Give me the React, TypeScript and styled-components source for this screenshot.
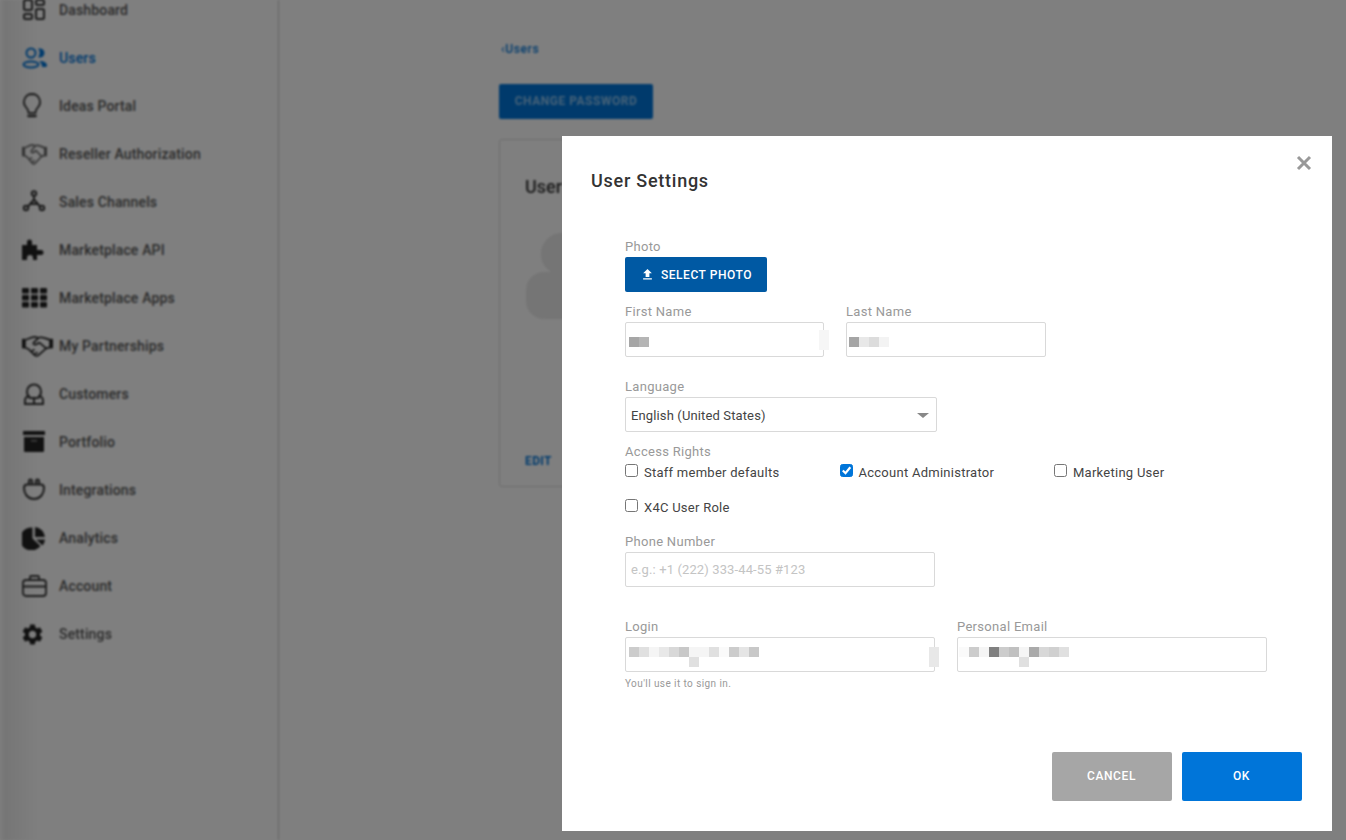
import React from "react";
import styled, { createGlobalStyle } from "styled-components";
import { MdSettings, MdFileUpload } from "react-icons/md";

const GlobalStyle = createGlobalStyle`
  html, body { margin: 0; padding: 0; height: 100%; overflow: hidden; }
  body { background: #fff; font-family: Roboto, "Liberation Sans", sans-serif; }
  * { box-sizing: border-box; }
`;

// --- page behind the dialog ---
const Screen = styled.div`
  position: relative;
  width: 1346px;
  height: 840px;
  overflow: hidden;
`;

const Page = styled.div`
  display: flex;
  height: 840px;
  filter: blur(1px);
`;

const Sidebar = styled.nav`
  flex: 0 0 279px;
  height: 840px;
  background: linear-gradient(90deg, #fafafa 0, #ececec 5px, #fafafa 30px, #fff 40px);
  border-right: 1px solid #c8c8c8;
`;

const NavList = styled.ul`
  list-style: none;
  margin: -14px 0 0;
  padding: 0 0 0 22px;
`;

const NavItem = styled.li<{ $active?: boolean }>`
  display: flex;
  align-items: center;
  height: 48px;
  color: ${(p) => (p.$active ? "#0075d9" : "#555")};
  font-size: 14px;
  font-weight: 500;
  letter-spacing: 0.15px;
`;

const IconSlot = styled.span`
  flex: 0 0 37px;
  display: flex;
  align-items: center;
  height: 26px;
`;

const Main = styled.main`
  flex: 1;
  padding: 41px 0 0 220px;
`;

const BackLink = styled.a`
  display: block;
  height: 16px;
  margin-left: 2px;
  color: #0075d9;
  font-size: 12px;
  font-weight: 500;
  line-height: 16px;
  letter-spacing: 0.6px;
`;

const ChangePassword = styled.div`
  display: flex;
  align-items: center;
  justify-content: center;
  width: 154px;
  height: 35px;
  margin-top: 27px;
  padding-bottom: 2px;
  border-radius: 2px;
  background: #0075d9;
  color: #8cc4f0;
  font-size: 12px;
  font-weight: 700;
  letter-spacing: 0.52px;
`;

const ProfileCard = styled.section`
  width: 640px;
  height: 348px;
  margin-top: 20px;
  padding: 36px 25px 0;
  border: 1px solid #d8d8d8;
  border-radius: 3px;
`;

const ProfileTitle = styled.h2`
  margin: 0;
  color: #333;
  font-size: 18px;
  font-weight: 500;
  line-height: 22px;
`;

const Avatar = styled.svg`
  display: block;
  margin: 34px 0 0;
`;

const EditLink = styled.a`
  display: block;
  margin-top: 134px;
  color: #0075d9;
  font-size: 12px;
  font-weight: 700;
  letter-spacing: 0.4px;
`;

const Backdrop = styled.div`
  position: absolute;
  inset: 0;
  background: rgba(0, 0, 0, 0.5);
`;

// --- dialog ---
const Dialog = styled.div`
  position: absolute;
  top: 136px;
  left: 562px;
  width: 770px;
  height: 695px;
  background: #fff;
`;

const CloseButton = styled.button`
  position: absolute;
  top: 19px;
  right: 20px;
  display: flex;
  padding: 0;
  border: 0;
  background: none;
  color: #999;
`;

const DialogTitle = styled.h1`
  margin: 0;
  padding: 33px 0 0 29px;
  color: #333;
  font-size: 18px;
  font-weight: 500;
  line-height: 24px;
  letter-spacing: 0.75px;
`;

const Form = styled.form`
  padding: 45px 0 0 63px;
`;

const FieldLabel = styled.label<{ $top?: number }>`
  display: block;
  height: 19px;
  margin-top: ${(p) => p.$top ?? 0}px;
  padding-top: 1px;
  color: #999;
  font-size: 13px;
  line-height: 16px;
  letter-spacing: 0.3px;
`;

const SelectPhoto = styled.button`
  display: flex;
  align-items: center;
  justify-content: center;
  gap: 6px;
  width: 142px;
  height: 35px;
  padding: 0;
  border: 0;
  border-radius: 2px;
  background: #0059a3;
  color: #fff;
  font-family: inherit;
  font-size: 12px;
  font-weight: 500;
  letter-spacing: 0.55px;
`;

const Row = styled.div<{ $gap: number; $top?: number }>`
  display: flex;
  gap: ${(p) => p.$gap}px;
  margin-top: ${(p) => p.$top ?? 0}px;
`;

const Field = styled.div`
  position: relative;
`;

const TextInput = styled.input<{ $width: number }>`
  display: block;
  width: ${(p) => p.$width}px;
  height: 35px;
  padding: 0 5px;
  border: 1px solid #d9d9d9;
  border-radius: 2px;
  background: #fff;
  color: #333;
  font-family: inherit;
  font-size: 13px;
  letter-spacing: 0.12px;
  outline: none;
  &::placeholder { color: #c4c4c4; opacity: 1; }
`;

const SelectBox = styled.div`
  display: flex;
  align-items: center;
  justify-content: space-between;
  width: 312px;
  height: 35px;
  padding: 1px 7px 0 5px;
  border: 1px solid #d9d9d9;
  border-radius: 2px;
  color: #444;
  font-size: 13px;
  letter-spacing: 0.13px;
`;

const Caret = styled.span`
  width: 0;
  height: 0;
  border-left: 6px solid transparent;
  border-right: 6px solid transparent;
  border-top: 5px solid #888;
`;

const RightsGrid = styled.div`
  display: grid;
  grid-template-columns: repeat(3, 214.5px);
  row-gap: 15px;
  margin-top: -1px;
`;

const CheckLabel = styled.div`
  display: flex;
  align-items: center;
  gap: 6px;
  height: 20px;
  padding-top: 2px;
  color: #444;
  font-size: 13px;
  letter-spacing: 0.26px;
`;

const CheckBox = styled.span<{ $checked?: boolean }>`
  display: flex;
  align-items: center;
  justify-content: center;
  width: 13px;
  height: 13px;
  margin-top: -4px;
  border: 1px solid ${(p) => (p.$checked ? "#0075d9" : "#767676")};
  border-radius: 2.5px;
  background: ${(p) => (p.$checked ? "#0075d9" : "#fff")};
`;

const Hint = styled.div`
  margin-top: 6px;
  color: #999;
  font-size: 10px;
  line-height: 12px;
  letter-spacing: 0.42px;
`;

const Mosaic = styled.svg`
  position: absolute;
  left: 0;
  top: 0;
  overflow: visible;
  pointer-events: none;
`;

const Footer = styled.div`
  display: flex;
  justify-content: flex-end;
  gap: 10px;
  margin-top: 62px;
  padding-right: 30px;
`;

const FooterButton = styled.button<{ $primary?: boolean }>`
  width: 120px;
  height: 49px;
  padding: 0 1px 2px 0;
  border: 0;
  border-radius: 2px;
  background: ${(p) => (p.$primary ? "#0075d9" : "#a6a6a6")};
  color: #fff;
  font-family: inherit;
  font-size: 12px;
  font-weight: 500;
  letter-spacing: 0.6px;
`;

// --- icons drawn to match the sidebar ---
const DashboardIcon = () => (
  <svg width="24" height="24" viewBox="0 0 24 24" fill="none" stroke="#333" strokeWidth="2">
    <rect x="2" y="2" width="8" height="10" rx="1.5" />
    <rect x="14" y="2" width="8" height="5" rx="1.5" />
    <rect x="2" y="16" width="8" height="5" rx="1.5" />
    <rect x="14" y="11" width="8" height="10" rx="1.5" />
  </svg>
);

const UsersIcon = () => (
  <svg width="26" height="24" viewBox="0 0 26 24" fill="none" stroke="#0075d9" strokeWidth="2">
    <circle cx="9" cy="7" r="4.5" />
    <ellipse cx="9" cy="18.5" rx="7.5" ry="3" />
    <path d="M16 2.500h2a4.500 4.500 0 0 1 0 9h-2a7 7 0 0 0 0-9z" fill="#0075d9" stroke="none" />
    <path d="M18 15c4 0 7 2 7 4.500 0 1-1 1.500-2 1.500h-3c0-2.500-1-4.500-3-6z" fill="#0075d9" stroke="none" />
  </svg>
);

const BulbIcon = () => (
  <svg width="24" height="26" viewBox="0 0 24 26" fill="none" stroke="#333" strokeWidth="1.8" style={{ marginLeft: -2 }}>
    <path d="M12 1a8 8 0 0 0-5.500 13.800c1.500 1.500 2 3 2 5h7c0-2 .5-3.500 2-5A8 8 0 0 0 12 1z" />
    <path d="M8.500 23h7" strokeWidth="2.600" strokeLinecap="round" />
  </svg>
);

const HandshakeIcon = ({ width, height, color }: { width: number; height: number; color: string }) => (
  <svg width={width} height={height} viewBox="0 0 32 23" preserveAspectRatio="none" fill="none" stroke={color} strokeWidth="1.800" strokeLinejoin="round">
    <rect x="0" y="4" width="3" height="10" fill={color} stroke="none" />
    <rect x="29" y="4" width="3" height="10" fill={color} stroke="none" />
    <path d="M3 5c3 0 6-3 10-3 2 0 3 1 4 1 3-2 7 1 12 2v8l-4 1-8 7c-1 1-3 1-4 0l-6-6-4-2z" />
    <path d="M17 3l-5 5c-1 2 2 3 4 1l2-1 7 6M10 17l3-2M13 20l3-2" />
  </svg>
);

const ChannelsIcon = () => (
  <svg width="24" height="24" viewBox="0 0 24 24" fill="none" stroke="#333" strokeWidth="2">
    <circle cx="12" cy="3.500" r="2.200" />
    <circle cx="4" cy="18" r="2.200" />
    <circle cx="20" cy="18" r="2.200" />
    <path d="M12 6v3.500M12 9.500l-6 7M12 9.500l6 7M8.500 14h7" />
  </svg>
);

const PuzzleIcon = () => (
  <svg width="24" height="24" viewBox="0 0 24 24" fill="#222">
    <path d="M0 7h5V4a2.500 2.500 0 0 1 5 0v3h5v5h4a2.500 2.500 0 0 1 0 5h-4v5h-4v-2a3 3 0 0 0-6 0v2H0z" />
  </svg>
);

const AppsIcon = () => (
  <svg width="25" height="24" viewBox="0 0 25 24" fill="#222">
    {[2, 9, 16].map((y) =>
      [0, 9, 18].map((x) => <rect key={`${x}-${y}`} x={x} y={y} width="7" height="5.500" rx="1" />)
    )}
  </svg>
);

const CustomersIcon = () => (
  <svg width="24" height="24" viewBox="0 0 24 24" fill="none" stroke="#333" strokeWidth="2">
    <path d="M5 9.500a7 7 0 0 1 14 0c0 3-1 5-3 6.500H8c-2-1.500-3-3.500-3-6.500z" />
    <path d="M8 14c-3 0-5 2-5 4.500V22h18v-3.500c0-2.500-2-4.500-5-4.500M12 17v5" />
  </svg>
);

const PortfolioIcon = () => (
  <svg width="24" height="24" viewBox="0 0 24 24" fill="#222">
    <rect x="1" y="1" width="22" height="4" rx="0.500" />
    <path d="M2 7h20v14a1 1 0 0 1-1 1H3a1 1 0 0 1-1-1z" />
    <rect x="9" y="10" width="6" height="1.500" fill="#888" />
  </svg>
);

const IntegrationsIcon = () => (
  <svg width="24" height="24" viewBox="0 0 24 24" fill="none" stroke="#333" strokeWidth="2">
    <path d="M7 6V3a1.500 1.500 0 0 1 3 0v3M14 6V3a1.500 1.500 0 0 1 3 0v3" />
    <path d="M5 6.500c-2 0-3 1-3 3.500 0 6 4 11 10 11s10-5 10-11c0-2.500-1-3.500-3-3.500z" />
  </svg>
);

const AnalyticsIcon = () => (
  <svg width="24" height="24" viewBox="0 0 24 24" fill="#222">
    <path d="M10.500 1.500v11l8 7.500a11.500 11.500 0 1 1-8-18.500z" />
    <path d="M13 1a11 11 0 0 1 10 10H13z" />
    <path d="M14 13.500h9a11 11 0 0 1-2.500 6z" />
  </svg>
);

const BriefcaseIcon = () => (
  <svg width="25" height="24" viewBox="0 0 25 24" fill="none" stroke="#333" strokeWidth="1.800">
    <rect x="1" y="6" width="23" height="16" rx="3" />
    <path d="M8 6V3a1 1 0 0 1 1-1h7a1 1 0 0 1 1 1v3M1 12.500h23" />
  </svg>
);

const CloseIcon = () => (
  <svg width="16" height="16" viewBox="0 0 16 16" fill="none" stroke="currentColor" strokeWidth="3">
    <path d="M2 2l12 12M14 2L2 14" />
  </svg>
);

const CheckIcon = () => (
  <svg width="11" height="11" viewBox="0 0 11 11" fill="none" stroke="#fff" strokeWidth="2.200">
    <path d="M1.800 5.500l2.700 2.700 4.800-6" />
  </svg>
);

const NAV = [
  { label: "Dashboard", icon: <DashboardIcon /> },
  { label: "Users", icon: <UsersIcon />, active: true },
  { label: "Ideas Portal", icon: <BulbIcon /> },
  { label: "Reseller Authorization", icon: <HandshakeIcon width={25} height={22} color="#666" /> },
  { label: "Sales Channels", icon: <ChannelsIcon /> },
  { label: "Marketplace API", icon: <PuzzleIcon /> },
  { label: "Marketplace Apps", icon: <AppsIcon /> },
  { label: "My Partnerships", icon: <HandshakeIcon width={31} height={22} color="#222" /> },
  { label: "Customers", icon: <CustomersIcon /> },
  { label: "Portfolio", icon: <PortfolioIcon /> },
  { label: "Integrations", icon: <IntegrationsIcon /> },
  { label: "Analytics", icon: <AnalyticsIcon /> },
  { label: "Account", icon: <BriefcaseIcon /> },
  { label: "Settings", icon: <MdSettings size={25} color="#222" style={{ marginLeft: -2 }} /> },
];

type Block = [number, number, string];

// pixelated values, in cells of 10px
const row = (colors: string[], y = 0): Block[] => colors.map((c, i) => [i, y, c]);

const FIRST_NAME: Block[] = [
  ...row(["#a6a6a6", "#b5b5b5"]),
  [19, -0.7, "#f6f6f6"],
  [19, 0.3, "#f6f6f6"],
];
const LAST_NAME: Block[] = [...row(["#a5a5a5", "#e8e8e8", "#dcdcdc", "#f3f3f3"])];
const LOGIN: Block[] = [
  ...row(["#ccc", "#e0e0e0", "#f5f5f5", "#e8e8e8", "#d8d8d8", "#c8c8c8", "#f5f5f5", "#f5f5f5", "#e0e0e0", "#fafafa", "#ccc", "#e5e5e5", "#c8c8c8"]),
  [6, 1, "#e0e0e0"],
  [30, 0, "#e8e8e8"],
  [30, 1, "#e8e8e8"],
];
const EMAIL: Block[] = [
  ...row(["#fafafa", "#ccc", "#f5f5f5", "#808080", "#ccc", "#c0c0c0", "#f5f5f5", "#aaa", "#d8d8d8", "#d0d0d0", "#e0e0e0"]),
  [6, 1, "#e0e0e0"],
];

const Pixels = ({ blocks, left = 4, top = 15 }: { blocks: Block[]; left?: number; top?: number }) => (
  <Mosaic width="320" height="35">
    {blocks.map(([x, y, fill], i) => (
      <rect key={i} x={left + x * 10} y={top + y * 10} width="10" height="10" fill={fill} />
    ))}
  </Mosaic>
);

export default function App() {
  return (
    <Screen>
      <GlobalStyle />
      <Page>
        <Sidebar>
          <NavList>
            {NAV.map((item) => (
              <NavItem key={item.label} $active={item.active}>
                <IconSlot>{item.icon}</IconSlot>
                {item.label}
              </NavItem>
            ))}
          </NavList>
        </Sidebar>
        <Main>
          <BackLink>‹Users</BackLink>
          <ChangePassword>CHANGE PASSWORD</ChangePassword>
          <ProfileCard>
            <ProfileTitle>User</ProfileTitle>
            <Avatar width="74" height="88" viewBox="0 0 74 88" fill="#eaeaea">
              <circle cx="37" cy="22" r="22" stroke="#fff" strokeWidth="2" />
              <rect x="1" y="40" width="72" height="47" rx="18" />
              <circle cx="37" cy="22" r="21" />
            </Avatar>
            <EditLink>EDIT</EditLink>
          </ProfileCard>
        </Main>
      </Page>
      <Backdrop />
      <Dialog>
        <CloseButton type="button" aria-label="Close">
          <CloseIcon />
        </CloseButton>
        <DialogTitle>User Settings</DialogTitle>
        <Form>
          <FieldLabel>Photo</FieldLabel>
          <SelectPhoto type="button">
            <MdFileUpload size={15} />
            SELECT PHOTO
          </SelectPhoto>

          <Row $gap={22} $top={11}>
            <Field>
              <FieldLabel>First Name</FieldLabel>
              <Field>
                <TextInput $width={199} />
                <Pixels blocks={FIRST_NAME} />
              </Field>
            </Field>
            <Field>
              <FieldLabel>Last Name</FieldLabel>
              <Field>
                <TextInput $width={200} />
                <Pixels blocks={LAST_NAME} left={3} />
              </Field>
            </Field>
          </Row>

          <FieldLabel $top={21}>Language</FieldLabel>
          <SelectBox>
            English (United States)
            <Caret />
          </SelectBox>

          <FieldLabel $top={11}>Access Rights</FieldLabel>
          <RightsGrid>
            <CheckLabel><CheckBox />Staff member defaults</CheckLabel>
            <CheckLabel><CheckBox $checked><CheckIcon /></CheckBox>Account Administrator</CheckLabel>
            <CheckLabel><CheckBox />Marketing User</CheckLabel>
            <CheckLabel><CheckBox />X4C User Role</CheckLabel>
          </RightsGrid>

          <FieldLabel $top={17}>Phone Number</FieldLabel>
          <TextInput $width={310} placeholder="e.g.: +1 (222) 333-44-55 #123" />

          <Row $gap={22} $top={31}>
            <Field>
              <FieldLabel>Login</FieldLabel>
              <Field>
                <TextInput $width={310} />
                <Pixels blocks={LOGIN} top={10} />
              </Field>
              <Hint>You'll use it to sign in.</Hint>
            </Field>
            <Field>
              <FieldLabel>Personal Email</FieldLabel>
              <Field>
                <TextInput $width={310} />
                <Pixels blocks={EMAIL} left={2} top={10} />
              </Field>
            </Field>
          </Row>
        </Form>
        <Footer>
          <FooterButton type="button">CANCEL</FooterButton>
          <FooterButton type="button" $primary>OK</FooterButton>
        </Footer>
      </Dialog>
    </Screen>
  );
}
